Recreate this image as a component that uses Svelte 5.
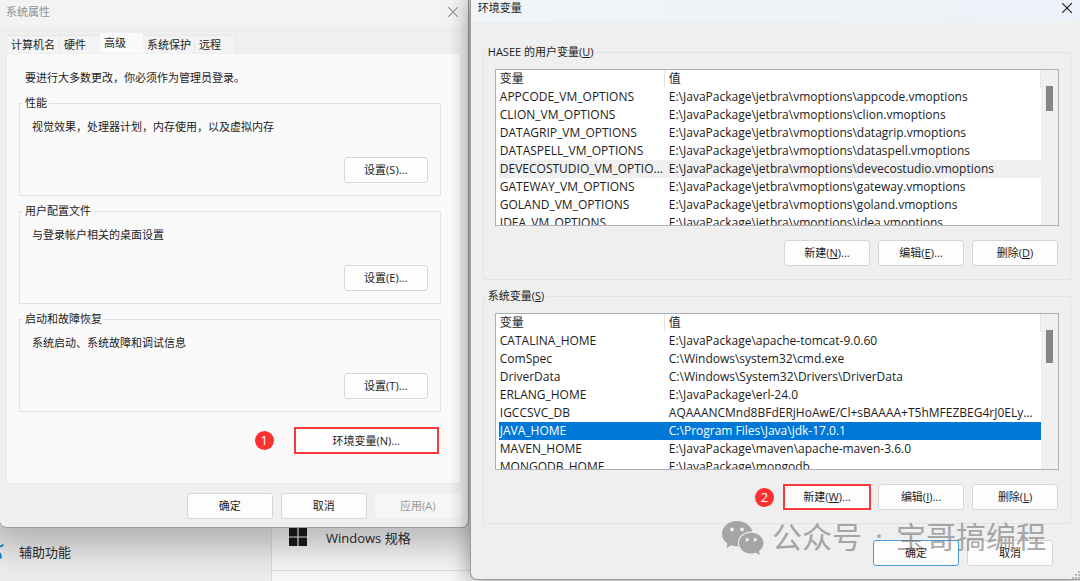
<script>
  const tabs = ['计算机名', '硬件', '高级', '系统保护', '远程'];

  const sections = [
    { title: '性能', text: '视觉效果，处理器计划，内存使用，以及虚拟内存', button: '设置(S)...' },
    { title: '用户配置文件', text: '与登录帐户相关的桌面设置', button: '设置(E)...' },
    { title: '启动和故障恢复', text: '系统启动、系统故障和调试信息', button: '设置(T)...' }
  ];

  const vm = (name, file) => [name, `E:\\JavaPackage\\jetbra\\vmoptions\\${file}.vmoptions`];

  const groups = [
    {
      title: 'HASEE 的用户变量', key: 'U', thumb: 'short', active: 4, mark: 'hover',
      rows: [
        vm('APPCODE_VM_OPTIONS', 'appcode'),
        vm('CLION_VM_OPTIONS', 'clion'),
        vm('DATAGRIP_VM_OPTIONS', 'datagrip'),
        vm('DATASPELL_VM_OPTIONS', 'dataspell'),
        vm('DEVECOSTUDIO_VM_OPTIONS', 'devecostudio'),
        vm('GATEWAY_VM_OPTIONS', 'gateway'),
        vm('GOLAND_VM_OPTIONS', 'goland'),
        vm('IDEA_VM_OPTIONS', 'idea')
      ],
      buttons: [['新建', 'N', '...'], ['编辑', 'E', '...'], ['删除', 'D', '']]
    },
    {
      title: '系统变量', key: 'S', thumb: 'long', active: 5, mark: 'selected', step: 2,
      rows: [
        ['CATALINA_HOME', 'E:\\JavaPackage\\apache-tomcat-9.0.60'],
        ['ComSpec', 'C:\\Windows\\system32\\cmd.exe'],
        ['DriverData', 'C:\\Windows\\System32\\Drivers\\DriverData'],
        ['ERLANG_HOME', 'E:\\JavaPackage\\erl-24.0'],
        ['IGCCSVC_DB', 'AQAAANCMnd8BFdERjHoAwE/Cl+sBAAAA+T5hMFEZBEG4rJ0ELyAAAAAA'],
        ['JAVA_HOME', 'C:\\Program Files\\Java\\jdk-17.0.1'],
        ['MAVEN_HOME', 'E:\\JavaPackage\\maven\\apache-maven-3.6.0'],
        ['MONGODB_HOME', 'E:\\JavaPackage\\mongodb']
      ],
      buttons: [['新建', 'W', '...'], ['编辑', 'I', '...'], ['删除', 'L', '']]
    }
  ];
</script>

<main class="desktop">
  <div class="settings">
    <div class="nav">
      <svg class="nav-icon" width="5" height="20" viewBox="0 0 5 20" aria-hidden="true">
        <path d="M0 4.5Q2 4.5 3.5 2.5M0 11L1 16.5" fill="none" stroke="#1686d0" stroke-width="2" />
      </svg>
      <span>辅助功能</span>
    </div>
    <div class="card">
      <svg width="18" height="18" viewBox="0 0 18 18" aria-hidden="true">
        <path d="M0 0h8.4v8.4H0zM9.6 0H18v8.4H9.6zM0 9.6h8.4V18H0zM9.6 9.6H18V18H9.6z" fill="#1b1b1b" />
      </svg>
      <span>Windows 规格</span>
    </div>
  </div>

  <section class="window properties">
    <header class="title">
      <span>系统属性</span>
      <button class="close" aria-label="关闭">
        <svg width="10" height="10" viewBox="0 0 10 10"><path d="M0 0L10 10M10 0L0 10" /></svg>
      </button>
    </header>
    <div class="content">
      <div class="tabs" role="tablist">
        {#each tabs as tab, i}
          <button class="tab" class:current={i === 2} role="tab" aria-selected={i === 2}>{tab}</button>
        {/each}
      </div>
      <div class="panel">
        <p class="hint">要进行大多数更改，你必须作为管理员登录。</p>
        {#each sections as s}
          <fieldset>
            <legend>{s.title}</legend>
            <p>{s.text}</p>
            <div class="actions"><button class="btn">{s.button}</button></div>
          </fieldset>
        {/each}
        <div class="env">
          <span class="step">1</span>
          <button class="btn marked">环境变量(N)...</button>
        </div>
      </div>
      <footer>
        <button class="btn">确定</button>
        <button class="btn">取消</button>
        <button class="btn" disabled>应用(A)</button>
      </footer>
    </div>
  </section>

  <section class="window variables">
    <header class="title">
      <span>环境变量</span>
      <button class="close" aria-label="关闭">
        <svg width="10" height="10" viewBox="0 0 10 10"><path d="M0 0L10 10M10 0L0 10" /></svg>
      </button>
    </header>
    <div class="content">
      {#each groups as g}
        <fieldset>
          <legend>{g.title}(<u>{g.key}</u>)</legend>
          <div class="list">
            <table>
              <thead><tr><th class="name">变量</th><th>值</th></tr></thead>
              <tbody>
                {#each g.rows as row, i}
                  <tr class={i === g.active ? g.mark : ''}><td>{row[0]}</td><td>{row[1]}</td></tr>
                {/each}
              </tbody>
            </table>
            <div class="scroll"><div class="thumb {g.thumb}"></div></div>
          </div>
          <div class="actions">
            {#if g.step}<span class="step">{g.step}</span>{/if}
            {#each g.buttons as b, i}
              <button class="btn" class:marked={g.step && i === 0}>{b[0]}(<u>{b[1]}</u>){b[2]}</button>
            {/each}
          </div>
        </fieldset>
      {/each}
      <footer>
        <button class="btn primary">确定</button>
        <button class="btn">取消</button>
      </footer>
    </div>
    <svg class="grip" width="8" height="8" viewBox="0 0 8 8" aria-hidden="true">
      <path d="M6 0h2v2H6zM3 3h2v2H3zM6 3h2v2H6zM0 6h2v2H0zM3 6h2v2H3zM6 6h2v2H6z" fill="#b9b9b9" />
    </svg>
  </section>

  <div class="watermark">
    <svg width="42" height="34" viewBox="0 0 42 34" aria-hidden="true">
      <path fill-rule="evenodd" d="M15 0C6.5 0 0 5.7 0 12.8c0 4.1 2.1 7.5 5.5 9.8L4 27l5.3-2.7c1.9.5 3.6.9 5.7.9h1.4a11 11 0 0 1-.5-3.2c0-6.600 5.900-11.600 13.200-11.600h1.300C28.900 4.400 22.600 0 15 0zM10 6.600a2 2 0 1 1 0 4 2 2 0 0 1 0-4zm10 0a2 2 0 1 1 0 4 2 2 0 0 1 0-4z" />
      <path fill-rule="evenodd" d="M29.300 11.800C22.200 11.800 17 16.500 17 22.200s5.200 10.400 12.300 10.400c1.500 0 3-.4 4.500-.8l4.200 2.200-1.200-3.700c3-2.200 4.700-5 4.700-8.100 0-5.700-5.700-10.400-12.200-10.400zM25.200 17a1.700 1.700 0 1 1 0 3.400 1.700 1.700 0 0 1 0-3.400zm8 0a1.700 1.700 0 1 1 0 3.400 1.700 1.700 0 0 1 0-3.400z" />
    </svg>
    <div class="account">
      <span>公众号</span>
      <span class="dot">·</span>
      <span>宝哥搞编程</span>
    </div>
  </div>
</main>

<style>
  :global(body) {
    margin: 0;
    background: #c9cacb;
  }
  .desktop {
    position: relative;
    min-height: 100vh;
    overflow: hidden;
    box-sizing: border-box;
    font: 11px/16px "Open Sans", "Noto Sans CJK SC", sans-serif;
    color: #1c1c1c;
  }
  .desktop *, .desktop *::before {
    box-sizing: border-box;
  }
  p {
    margin: 0;
  }
  button {
    font: inherit;
    color: inherit;
    padding: 0;
    white-space: nowrap;
  }

  /* settings page behind the dialogs */
  .settings {
    position: absolute;
    inset: 0;
    display: flex;
    align-items: flex-end;
    background: #ececec;
    font-size: 13px;
    line-height: 20px;
    color: #2c2c2c;
  }
  .nav {
    flex: 0 0 271px;
    display: flex;
    align-items: center;
    gap: 14px;
    padding-bottom: 19px;
  }
  .card {
    flex: 1;
    display: flex;
    align-items: flex-start;
    gap: 19px;
    height: 100%;
    padding: 528px 0 0 17px;
    border-left: 1px solid #dcdcdc;
    background: linear-gradient(#f6f6f6 570px, #dedede 570px, #dedede 571px, #f6f6f6 571px);
  }

  /* windows */
  .window {
    position: absolute;
    top: 0;
    background: #efefef;
    border: 0 solid #9b9b9b;
  }
  .properties {
    left: 0;
    width: 43.4%;
    border-width: 0 1px 1px 0;
    border-radius: 0 0 7px 7px;
    box-shadow: 0 8px 32px 12px rgba(0, 0, 0, 0.24);
  }
  .variables {
    left: 43.5%;
    right: 0;
    border-width: 0 0 1px 1px;
    border-radius: 0 0 0 7px;
    box-shadow: 0 0 20px 2px rgba(0, 0, 0, 0.36);
  }
  .title {
    display: flex;
    align-items: center;
    justify-content: space-between;
  }
  .properties .title {
    height: 26px;
    padding: 0 10px 2px 6px;
    background: #f3f3f3;
    color: #909090;
  }
  .variables .title {
    height: 22px;
    padding: 0 8px 6px 7px;
    background: linear-gradient(90deg, #eff5f8, #eef3f7 60%, #eef1f9);
  }
  .close {
    display: flex;
    border: 0;
    background: none;
  }
  .close path {
    fill: none;
    stroke: currentColor;
    stroke-width: 1.1;
  }

  .properties .content {
    padding: 7px 7px 8px 6px;
  }
  .tabs {
    display: flex;
    align-items: flex-end;
    height: 20px;
  }
  .tab {
    height: 18px;
    padding: 0 4px;
    border: 1px solid #e6e6e6;
    border-width: 1px 1px 0 0;
    background: #f3f3f3;
    text-align: left;
  }
  .tab:first-child {
    width: 54px;
    border-left-width: 1px;
  }
  .tab:nth-child(2) {
    width: 40px;
    border-right-width: 0;
  }
  .tab.current {
    width: 43px;
    height: 20px;
    border: 0;
    background: #fafafa;
  }
  .tab:nth-child(4) {
    width: 52px;
  }
  .tab:nth-child(5) {
    width: 41px;
  }
  .panel {
    padding: 16px 19px 29px 12px;
    border: 1px solid #e8e8e8;
    border-top-color: #f0f0f0;
    background: #fafafa;
  }
  .hint {
    margin: 0 6px 9px;
  }
  fieldset {
    min-width: 0;
    margin: 0;
    border: 1px solid #e3e3e3;
  }
  legend {
    padding: 0 2px;
  }
  .properties fieldset {
    margin-bottom: 7px;
    padding: 8px 12px 12px 3px;
  }
  .properties fieldset p {
    margin: 0 9px 22px;
  }
  .actions, footer, .env {
    display: flex;
    align-items: center;
    justify-content: flex-end;
    gap: 8px;
  }
  .btn {
    width: 86px;
    height: 26px;
    border: 1px solid #d6d6d6;
    border-radius: 3px;
    background: #fdfdfd;
  }
  .btn:disabled {
    border-color: #f4f4f4;
    background: #f6f6f6;
    color: #989898;
  }
  .btn.primary {
    border-color: #469bd8;
  }
  .btn.marked {
    border: 2px solid #fa3a3a;
    border-radius: 0;
  }
  .properties fieldset .btn {
    width: 84px;
  }
  .env {
    gap: 20px;
    margin: 15px 2px 0 0;
  }
  .env .btn {
    width: 145px;
    height: 27px;
  }
  .step {
    width: 19px;
    height: 19px;
    border-radius: 50%;
    background: #fb3131;
    color: #fff;
    font-size: 13px;
    line-height: 19px;
    text-align: center;
  }
  .properties footer {
    margin-top: 9px;
  }

  .variables .content {
    padding: 22px 9px 13px 12px;
  }
  .variables fieldset {
    margin-bottom: 8px;
    padding: 9px 11px 13px 2px;
  }
  .variables .actions {
    margin-right: 1px;
  }
  .variables .marked {
    width: 88px;
    margin: 0 -1px;
  }
  .variables .step {
    margin-right: 2px;
  }
  .list {
    display: flex;
    height: 157px;
    margin: 0 0 14px 9px;
    padding-left: 3px;
    border: 1px solid #aeb0b6;
    background: #fff;
    overflow: hidden;
  }
  table {
    flex: 1;
    align-self: flex-start;
    min-width: 0;
    width: 100%;
    table-layout: fixed;
    border-collapse: separate;
    border-spacing: 0;
    font-size: 12px;
  }
  th, td {
    height: 18px;
    padding: 0 4px;
    font-weight: 400;
    line-height: 18px;
    text-align: left;
    white-space: nowrap;
    overflow: hidden;
    text-overflow: ellipsis;
  }
  th {
    border-right: 1px solid #e4e4e4;
  }
  .name {
    width: 166px;
  }
  th:first-child, td:first-child {
    padding: 0 1px;
  }
  .hover td {
    background: #f0f0f0;
  }
  .selected td {
    background: #0078d7;
    color: #fff;
  }
  .scroll {
    flex: 0 0 17px;
    padding: 16px 5px 0;
    background: #f0f0f0;
  }
  .thumb {
    background: #868686;
  }
  .short {
    height: 25px;
  }
  .long {
    height: 33px;
  }
  .variables footer {
    margin: 16px 18px 0 0;
  }
  .grip {
    position: absolute;
    right: 0;
    bottom: 0;
  }

  .watermark {
    position: absolute;
    top: 513px;
    right: 34px;
    display: flex;
    align-items: center;
    gap: 8px;
    font: 30px/44px "Noto Sans CJK SC", sans-serif;
    color: #6c6c6c;
    opacity: 0.56;
    white-space: nowrap;
    pointer-events: none;
  }
  .watermark svg {
    margin-top: 6px;
    fill: currentColor;
  }
  .account {
    display: flex;
    gap: 13px;
  }
  .dot {
    font-family: "Open Sans", sans-serif;
  }
</style>
